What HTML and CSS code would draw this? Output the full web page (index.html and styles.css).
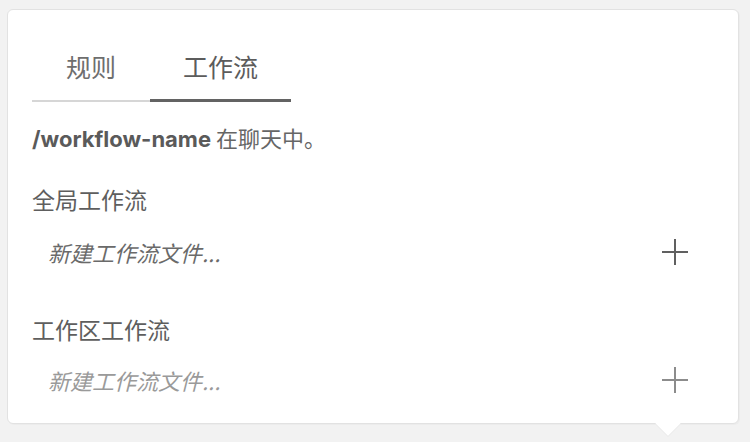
FILE: index.html
```html
<!DOCTYPE html>
<html lang="zh-CN">
<head>
<meta charset="utf-8">
<link rel="stylesheet" href="styles.css">
</head>
<body>
<div class="card">
  <div class="tabs">
    <div class="tab">规则</div>
    <div class="tab active">工作流</div>
  </div>
  <p class="desc"><strong>/workflow-name</strong> 在聊天中。</p>
  <section class="section">
    <h3 class="section-title">全局工作流</h3>
    <div class="row">
      <span class="placeholder">新建工作流文件...</span>
      <svg class="plus" width="26" height="26" viewBox="0 0 26 26"><path d="M13 0V26M0 13H26" stroke="currentColor" stroke-width="2" fill="none"/></svg>
    </div>
  </section>
  <section class="section second">
    <h3 class="section-title">工作区工作流</h3>
    <div class="row dim">
      <span class="placeholder">新建工作流文件...</span>
      <svg class="plus" width="26" height="26" viewBox="0 0 26 26"><path d="M13 0V26M0 13H26" stroke="currentColor" stroke-width="2" fill="none"/></svg>
    </div>
  </section>
  <div class="caret"></div>
</div>
</body>
</html>
```
FILE: styles.css
```css
* { box-sizing: border-box; }
html, body {
  margin: 0;
  padding: 0;
  background: #f2f2f2;
  font-family: Inter, "Noto Sans CJK SC", sans-serif;
}
body { padding: 9px 0 0 7px; height: 442px; overflow: hidden; }
.card {
  position: relative;
  width: 732px;
  height: 415px;
  background: #fff;
  border: 1px solid #e2e2e2;
  box-shadow: 1px 1px 0 #ececec;
  border-radius: 6px;
  padding: 40px 25px 0 24px;
}
.tabs {
  display: flex;
}
.tab {
  font-family: "Noto Sans CJK SC", sans-serif;
  font-size: 25px;
  line-height: 32px;
  color: #6e6e6e;
  padding: 0 34px 18px;
  border-bottom: 2px solid #d6d6d6;
}
.tab.active {
  color: #5c5c5c;
  padding: 0 33px 17px;
  border-bottom: 3px solid #636363;
}
.desc {
  margin: 20px 0 0;
  font-family: "Noto Sans CJK SC", sans-serif;
  font-size: 22px;
  line-height: 30px;
  color: #666;
}
.desc strong {
  font-family: Inter, sans-serif;
  font-weight: 700;
  color: #5a5a5a;
}
.section { margin-top: 30px; }
.section.second { margin-top: 42px; }
.section-title {
  margin: 0;
  font-family: "Noto Sans CJK SC", sans-serif;
  font-weight: 400;
  font-size: 23px;
  line-height: 30px;
  color: #5e5e5e;
}
.row {
  display: flex;
  align-items: center;
  justify-content: space-between;
  height: 40px;
  margin-top: 18px;
  padding: 0 25px 0 16px;
  color: #606060;
}
.second .row { margin-top: 16px; }
.placeholder {
  font-family: "Noto Sans CJK SC", sans-serif;
  font-style: italic;
  font-size: 22px;
  color: #6a6a6a;
}
.row.dim { color: #8c8c8c; }
.row.dim .placeholder { color: #9a9a9a; }
.plus { display: block; }
.caret {
  position: absolute;
  left: 651px;
  bottom: -9px;
  width: 18px;
  height: 18px;
  background: #fff;
  transform: rotate(45deg);
  box-shadow: 1px 1px 0 #ececec;
}
```
